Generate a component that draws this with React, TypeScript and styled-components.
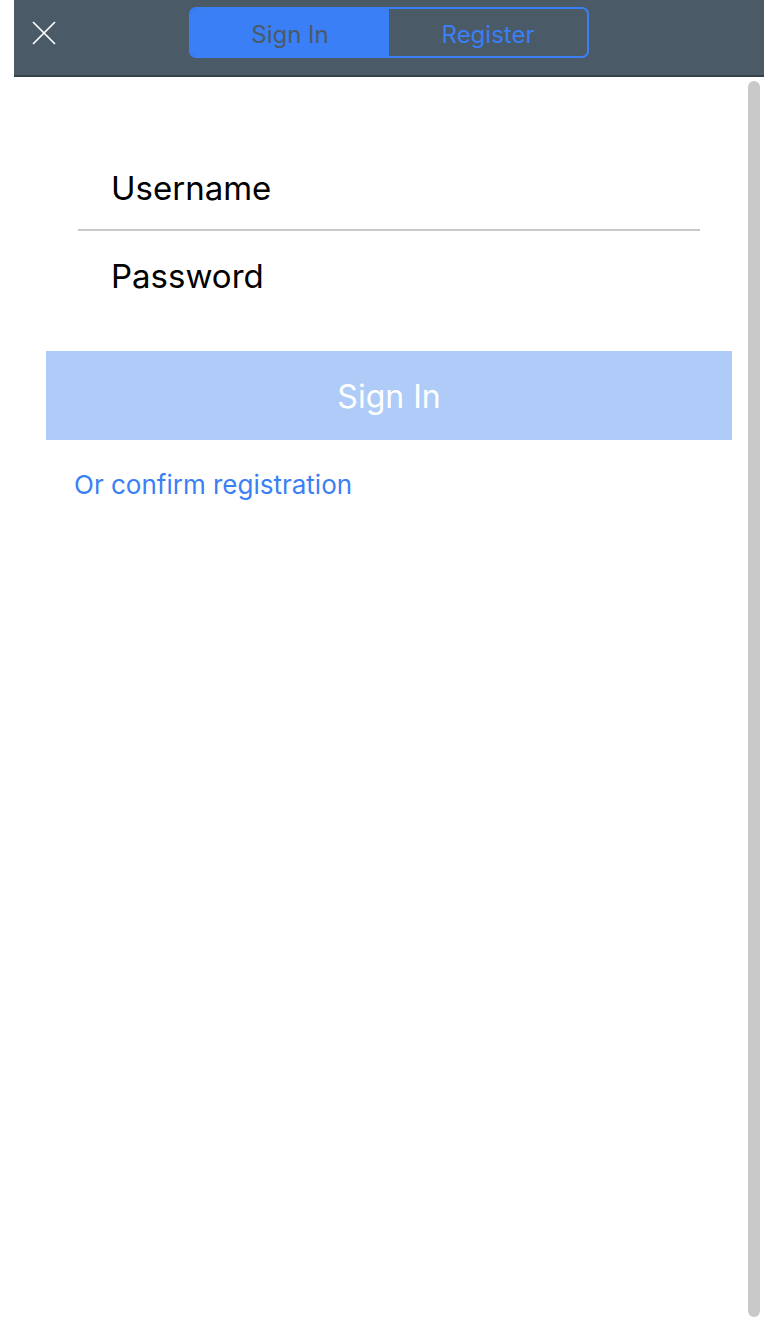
import React from "react";
import styled, { createGlobalStyle } from "styled-components";

const Global = createGlobalStyle`
  html, body { margin: 0; padding: 0; background: #ffffff; }
  body { font-family: Inter, "Open Sans", "Liberation Sans", sans-serif; }
  * { box-sizing: border-box; }
`;

const Page = styled.div`
  width: 764px;
  height: 1323px;
  display: flex;
  flex-direction: column;
  background: #fff;
  overflow: hidden;
`;

const Header = styled.header`
  margin-left: 14px;
  height: 77px;
  background: #4a5a66;
  border-bottom: 2px solid #34424c;
  display: flex;
  align-items: flex-start;
`;

const CloseButton = styled.button`
  width: 24px;
  height: 24px;
  margin: 21px 0 0 18px;
  padding: 0;
  border: none;
  background: transparent;
  display: flex;
  align-items: center;
  justify-content: center;
  cursor: pointer;
`;

const Segmented = styled.div`
  margin: 7px 0 0 133px;
  width: 400px;
  height: 51px;
  border: 2px solid #3a7ff6;
  border-radius: 7px;
  display: flex;
  overflow: hidden;
`;

const Segment = styled.button<{ $active?: boolean }>`
  flex: 1;
  border: none;
  margin: 0;
  padding: 5px 0 0;
  background: ${(p) => (p.$active ? "#3a7ff6" : "transparent")};
  color: ${(p) => (p.$active ? "#4a5a66" : "#3a7ff6")};
  font-family: Inter, "Open Sans", "Liberation Sans", sans-serif;
  font-size: 24px;
  line-height: 1;
  display: flex;
  align-items: center;
  justify-content: center;
`;

const Body = styled.div`
  flex: 1;
  display: flex;
  min-height: 0;
`;

const Main = styled.main`
  flex: 1;
  display: flex;
  flex-direction: column;
  padding-top: 66px;
`;

const Fields = styled.div`
  margin: 0 48px 0 78px;
  display: flex;
  flex-direction: column;
`;

const Field = styled.div`
  height: 86px;
  display: flex;
  align-items: center;
  padding: 4px 0 0 33px;
  font-size: 33px;
  line-height: 1;
  color: #000;
`;

const Divider = styled.div`
  height: 2px;
  background: #c8c8cc;
`;

const PrimaryButton = styled.button`
  margin: 34px 16px 0 46px;
  height: 89px;
  border: none;
  background: #afcbf8;
  color: #ffffff;
  font-family: Inter, "Open Sans", "Liberation Sans", sans-serif;
  font-size: 32px;
  line-height: 1;
  display: flex;
  align-items: center;
  justify-content: center;
  padding: 2px 0 0;
`;

const LinkText = styled.a`
  margin: 30px 0 0 74px;
  color: #3b7ff5;
  font-size: 26px;
  line-height: 30px;
  text-decoration: none;
  align-self: flex-start;
`;

const ScrollRail = styled.div`
  width: 16px;
  padding: 4px 4px 6px 0;
  display: flex;
`;

const ScrollThumb = styled.div`
  flex: 1;
  background: #c9c9c9;
  border-radius: 6px;
`;

export default function App() {
  return (
    <>
      <Global />
      <Page>
        <Header>
          <CloseButton aria-label="Close">
            <svg width="24" height="24" viewBox="0 0 24 24">
              <path d="M1 1 L23 23 M23 1 L1 23" stroke="#ffffff" strokeWidth="1.7" fill="none" />
            </svg>
          </CloseButton>
          <Segmented>
            <Segment $active>Sign In</Segment>
            <Segment>Register</Segment>
          </Segmented>
        </Header>
        <Body>
          <Main>
            <Fields>
              <Field>Username</Field>
              <Divider />
              <Field>Password</Field>
            </Fields>
            <PrimaryButton>Sign In</PrimaryButton>
            <LinkText href="#">Or confirm registration</LinkText>
          </Main>
          <ScrollRail>
            <ScrollThumb />
          </ScrollRail>
        </Body>
      </Page>
    </>
  );
}
